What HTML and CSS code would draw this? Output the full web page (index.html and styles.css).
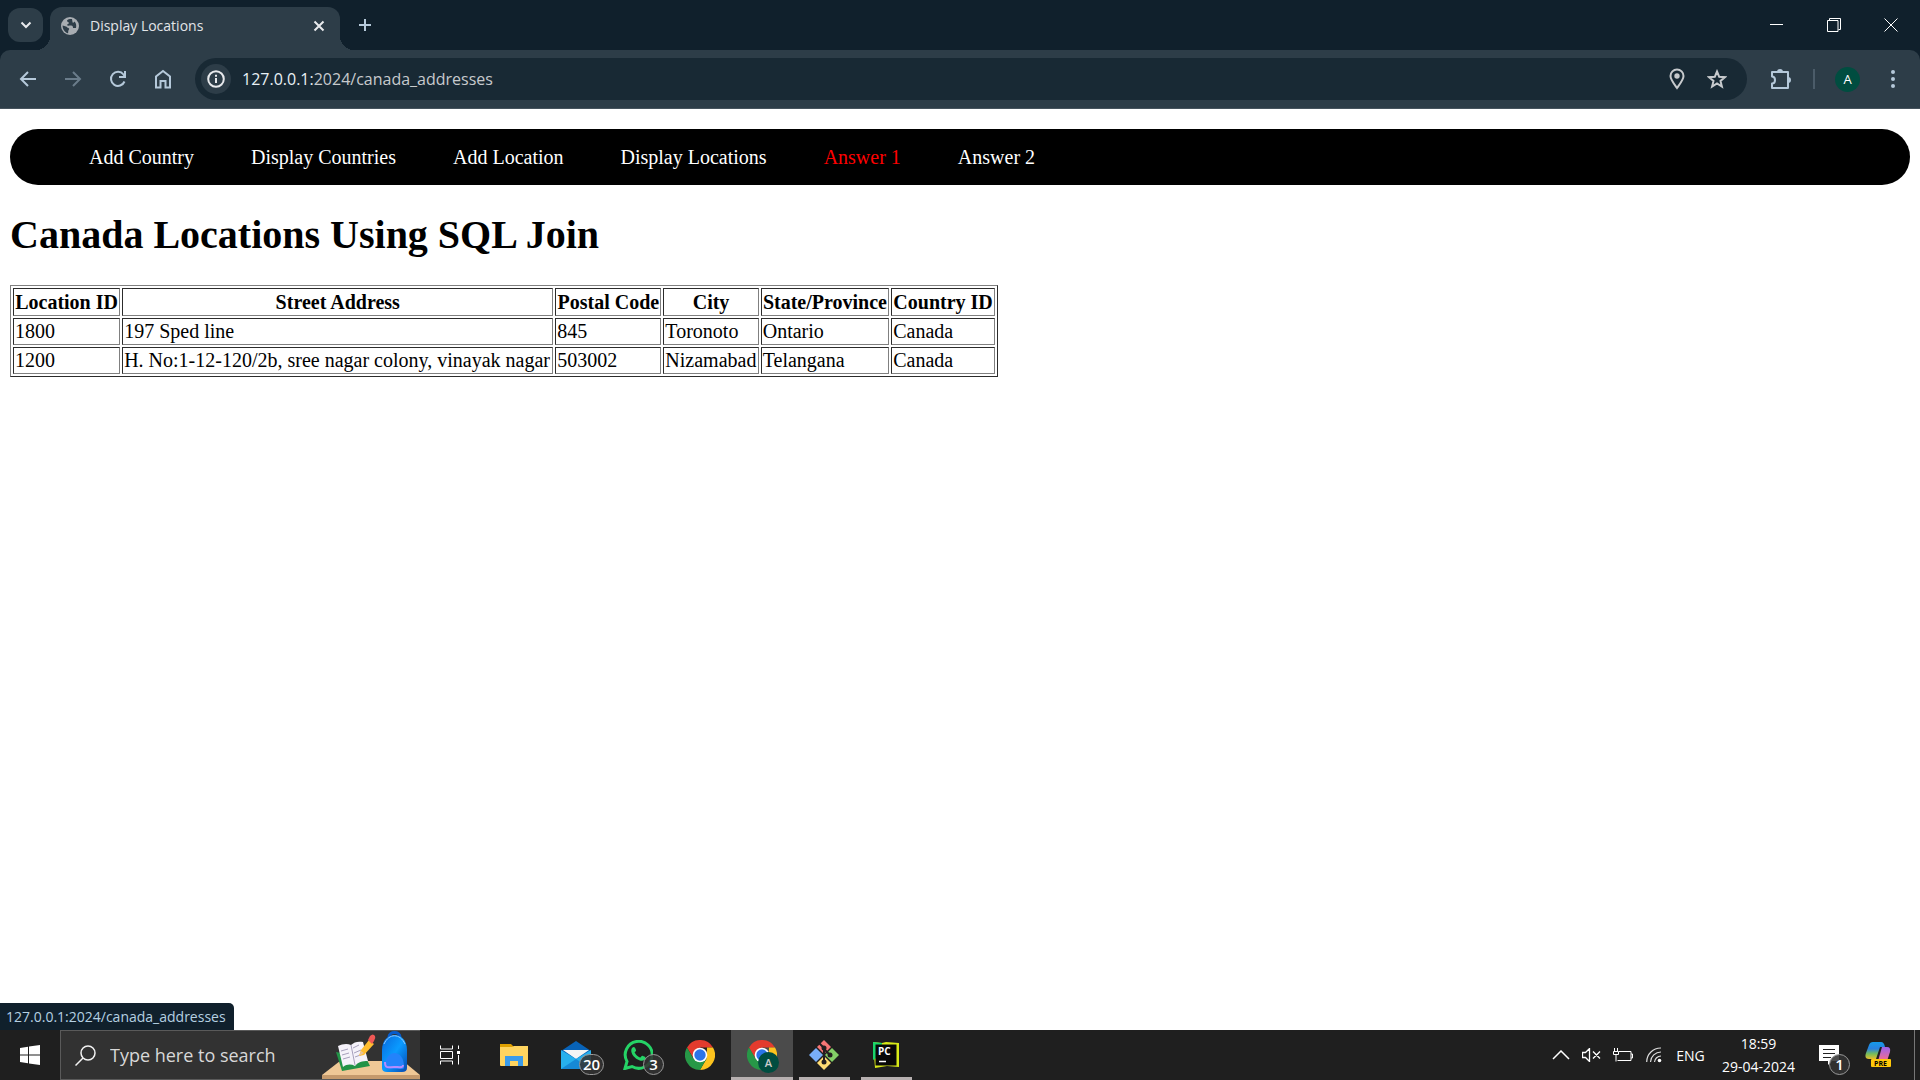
FILE: index.html
```html
<!DOCTYPE html>
<html lang="en">
<head>
<meta charset="utf-8">
<title>Display Locations</title>
<link rel="stylesheet" href="styles.css">
</head>
<body>
<header class="browser">
  <div class="tabstrip">
    <button class="tab-search" aria-label="Search tabs"><svg width="12" height="8" viewBox="0 0 12 8"><path d="M1.5 1.5 6 6l4.500-4.500" class="line"/></svg></button>
    <div class="tab">
      <svg width="18" height="18" viewBox="0 0 18 18"><circle cx="9" cy="9" r="9" fill="#a8adb2"/><path d="M9 2c-2 0-3 1-3 2s2 1 2 2-2 1-2 2 2 .5 4 .5 2 1.500 2 2.500h3c.7-3 0-5-1.500-6.500-1 1.500-2 1.500-2 .5S11 3 11 2zM1.600 8.500l3.400 1c1 .3 1 1.500 2.500 1.500.8.500 1 1 .2 2s-.2 2-.7 3.300C4 15.500 1.500 12.500 1.600 8.500z" fill="#2d3d48"/></svg>
      <span class="tab-title">Display Locations</span>
      <button class="icon-button close" aria-label="Close tab"><svg width="12" height="12" viewBox="0 0 12 12"><path d="M1.500 1.500l9 9m0-9-9 9" class="line"/></svg></button>
    </div>
    <button class="icon-button new-tab" aria-label="New tab"><svg width="14" height="14" viewBox="0 0 14 14"><path d="M7 1v12M1 7h12" class="line tint"/></svg></button>
    <div class="window-controls">
      <button class="icon-button" aria-label="Minimize"><svg width="14" height="14" viewBox="0 0 14 14"><path d="M0 6.500h13" stroke="#fff"/></svg></button>
      <button class="icon-button" aria-label="Restore"><svg width="14" height="14" viewBox="0 0 14 14"><path d="M.5 2.500h10.500v11H.5zM2.500 2.500v-2h11v11h-2" fill="none" stroke="#fff"/></svg></button>
      <button class="icon-button" aria-label="Close"><svg width="14" height="14" viewBox="0 0 14 14"><path d="M.5.500l13 13m0-13-13 13" stroke="#fff"/></svg></button>
    </div>
  </div>
  <div class="toolbar">
    <button class="icon-button" aria-label="Back"><svg width="18" height="18" viewBox="0 0 18 18"><path d="M17 9H2.500M9 2 2 9l7 7" class="line tint"/></svg></button>
    <button class="icon-button dim" aria-label="Forward"><svg width="18" height="18" viewBox="0 0 18 18"><path d="M1 9h14.500M9 2l7 7-7 7" class="line tint"/></svg></button>
    <button class="icon-button" aria-label="Reload"><svg width="18" height="18" viewBox="0 0 18 18"><path d="M15.500 11.500A7 7 0 1 1 14.500 4.500L15.800 6M16 1v6h-6" class="line tint"/></svg></button>
    <button class="icon-button" aria-label="Home"><svg width="18" height="20" viewBox="0 0 18 20"><path d="M2 18.500V7.500L9 2l7 5.500v11h-4.500v-6.500h-5v6.500z" class="line tint"/></svg></button>
    <div class="omnibox">
      <button class="site-info" aria-label="Site information"><svg width="18" height="18" viewBox="0 0 18 18"><circle cx="9" cy="9" r="7.800" class="line"/><path d="M9 8v5M9 4.700v2" class="line"/></svg></button>
      <div class="url"><span class="host">127.0.0.1:</span>2024/canada_addresses</div>
      <button class="icon-button" aria-label="Location"><svg width="16" height="22" viewBox="0 0 16 22"><path d="M8 20C4 14.500 1.500 11.500 1.500 8a6.500 6.500 0 0 1 13 0c0 3.500-2.500 6.500-6.500 12z" class="line gray"/><circle cx="8" cy="8" r="2.700" fill="#c7cacd"/></svg></button>
      <button class="icon-button" aria-label="Bookmark"><svg width="20" height="20" viewBox="0 0 20 20"><path d="M10 2.500l2.200 5.300 5.700.4-4.400 3.700 1.400 5.600-4.900-3-4.900 3 1.400-5.600-4.400-3.700 5.700-.4z" class="line gray"/></svg></button>
    </div>
    <button class="icon-button" aria-label="Extensions"><svg width="22" height="22" viewBox="0 0 22 22"><path d="M2 4h16v16H2v-4.500c4 0 4-7 0-7z" class="line tint" stroke-linejoin="round"/><path d="M7 4a3 3 0 0 1 6 0zM18 9a3 3 0 0 1 0 6z" fill="#b5c9da"/></svg></button>
    <span class="divider"></span>
    <button class="icon-button" aria-label="Profile"><span class="avatar">A</span></button>
    <button class="icon-button" aria-label="Menu"><svg width="6" height="20" viewBox="0 0 6 20"><path d="M3 3v.01M3 10v.01M3 17v.01" stroke="#b5c9da" stroke-width="4" stroke-linecap="round"/></svg></button>
  </div>
</header>

<main class="page">
  <nav class="menu">
    <a href="#">Add Country</a>
    <a href="#">Display Countries</a>
    <a href="#">Add Location</a>
    <a href="#">Display Locations</a>
    <a href="#" class="current">Answer 1</a>
    <a href="#">Answer 2</a>
  </nav>
  <h1>Canada Locations Using SQL Join</h1>
  <table class="locations">
    <thead><tr><th>Location ID</th><th>Street Address</th><th>Postal Code</th><th>City</th><th>State/Province</th><th>Country ID</th></tr></thead>
    <tbody>
      <tr><td>1800</td><td>197 Sped line</td><td>845</td><td>Toronoto</td><td>Ontario</td><td>Canada</td></tr>
      <tr><td>1200</td><td>H. No:1-12-120/2b, sree nagar colony, vinayak nagar</td><td>503002</td><td>Nizamabad</td><td>Telangana</td><td>Canada</td></tr>
    </tbody>
  </table>
  <div class="status">127.0.0.1:2024/canada_addresses</div>
</main>

<footer class="taskbar">
  <button class="start" aria-label="Start"><svg width="20" height="20" viewBox="0 0 20 20"><path d="M0 3l8-1.200V9.500H0zM9 1.600 20 0v9.500H9zM0 10.500h8v7.800L0 17zM9 10.500h11V20L9 18.400z" fill="#fff"/></svg></button>
  <div class="search">
    <svg width="21" height="21" viewBox="0 0 21 21"><circle cx="13" cy="8" r="7" fill="none" stroke="#f2f2f2" stroke-width="1.500"/><path d="M8 13 .5 20.500" stroke="#f2f2f2" stroke-width="1.500"/></svg>
    <input type="text" aria-label="Search" placeholder="Type here to search">
    <svg width="98" height="48" viewBox="0 0 98 48">
      <defs><linearGradient id="bag" x2="1" y2="1"><stop stop-color="#0867dc"/><stop offset=".5" stop-color="#0a9bff"/><stop offset="1" stop-color="#0648b0"/></linearGradient></defs>
      <path d="M18 30h63l17 14H0z" fill="#efc896"/><path d="M0 44h98v4H0z" fill="#c59a6c"/>
      <path d="M14 21l6 19 28-5-4-8z" fill="#229347"/><path d="M16 15l5 21c4-3 8-3 12-1 3-4 7-5 13-5l-5-19c-5-1-9 0-12 3-4-2-9-1-13 1z" fill="#f5f2fa"/>
      <path d="M29 14l4 20M19 20l7-2m-6 6 7-2m-6 6 7-2m3-9 6-3m-5 8 7-3m-6 7 8-3" stroke="#a7a0bc" fill="none"/>
      <path d="M37 25l2-6 8-10 5 4-10 11z" fill="#ffbd30"/><path d="M46 9l2-4q3-3 5 0 1 2-1 5l-2 3z" fill="#ef5855"/><path d="M37 25l2-5 3 2z" fill="#e9c39a"/>
      <path d="M67 6c0-6 11-6 11 0" fill="none" stroke="#075bcb" stroke-width="3"/><path d="M60 19c0-20 25-20 25 0v18q0 4-5 4H65q-5 0-5-4z" fill="url(#bag)"/><path d="M62 13c5-11 16-11 21 0" stroke="#8ecbff" fill="none"/><path d="M63 37c-1-20 20-20 19 0q0 1-3 1H66q-3 0-3-1z" fill="#2383fb"/><path d="M63 31c0 7 3 5 9 5s9 1 9-2" stroke="#b58cff" stroke-width="2" fill="none"/>
    </svg>
  </div>
  <button class="task-view" aria-label="Task view"><svg width="20" height="20" viewBox="0 0 20 20"><path d="M.5.500V4h12V.500M.5 19.500V16h12v3.500M.5 6.500h12v7H.5zM18.500.500V4M18.500 10v9.500" fill="none" stroke="#fff"/><path d="M17 6h3v3h-3z" fill="#fff"/></svg></button>
  <button class="app" aria-label="File Explorer"><svg width="28" height="24" viewBox="0 0 28 24"><path d="M0 1h11l3 3H0z" fill="#dfa000"/><path d="M0 4h12l2-1h14v19q0 1-1 1H1q-1 0-1-1z" fill="#ffd45f"/><path d="M5 23V13h18v10h-5v-5h-8v5z" fill="#3b9be9"/></svg></button>
  <button class="app" aria-label="Mail"><svg width="30" height="28" viewBox="0 0 30 28"><path d="M0 10 15 0l15 10-15 10z" fill="#0863b8"/><path d="M2 9h26L15 18z" fill="#f5f5f5"/><path d="M0 9l15 9 15-9v19H0z" fill="#27b0ed"/><path d="M0 28l15-10 15 10z" fill="#1689d6"/></svg><span class="badge wide">20</span></button>
  <button class="app" aria-label="WhatsApp"><svg width="30" height="30" viewBox="0 0 30 30"><path d="M2 28.500l2-7A13.500 13.500 0 1 1 9 26.500z" fill="none" stroke="#25d366" stroke-width="3"/><path d="M9 8c2-2 3-1 4 2 .5 1.500-2 2-1 3 1 2 3 4 5 4.500 1 .2 1.500-2 2.500-1.700 3 1.200 3.500 1.500 3 3C19 25 5 15 9 8z" fill="#25d366"/></svg><span class="badge">3</span></button>
  <button class="app" aria-label="Chrome"><svg width="30" height="30" viewBox="0 0 30 30"><path d="M2 7.500a15 15 0 0 1 26 0H15l-6.500 11z" fill="#e33b2e"/><path d="M28 7.500A15 15 0 0 1 15 30l6.500-11.300L22 7.500z" fill="#fcc31e"/><path d="M2 7.500A15 15 0 0 0 15 30l6.500-11.300H8.500z" fill="#279847"/><circle cx="15" cy="15" r="7.300" fill="#fff"/><circle cx="15" cy="15" r="5.700" fill="#2b74e8"/></svg></button>
  <button class="app active" aria-label="Chrome, profile A"><svg width="30" height="30" viewBox="0 0 30 30"><path d="M2 7.500a15 15 0 0 1 26 0H15l-6.500 11z" fill="#e33b2e"/><path d="M28 7.500A15 15 0 0 1 15 30l6.500-11.300L22 7.500z" fill="#fcc31e"/><path d="M2 7.500A15 15 0 0 0 15 30l6.500-11.300H8.500z" fill="#279847"/><circle cx="15" cy="15" r="7.300" fill="#fff"/><circle cx="15" cy="15" r="5.700" fill="#2b74e8"/></svg><span class="badge profile">A</span></button>
  <button class="app running" aria-label="Git"><svg width="30" height="30" viewBox="0 0 30 30"><path d="M15 0l7 7-7 7-7-7z" fill="#f87676"/><path d="M23 8l7 7-7 7-7-7z" fill="#83cf67"/><path d="M7 8l7 7-7 7-7-7z" fill="#79aef8"/><path d="M15 16l7 7-7 7-7-7z" fill="#ffdc74"/><path d="M10 3l5 5v14M15 9l6 6" fill="none" stroke="#231f20" stroke-width="2"/><circle cx="15" cy="8" r="2.500" fill="#231f20"/><circle cx="15" cy="22" r="2.500" fill="#231f20"/><circle cx="21" cy="15" r="2.500" fill="#231f20"/></svg></button>
  <button class="app running" aria-label="PyCharm"><svg width="26" height="26" viewBox="0 0 26 26"><path d="M0 0l9 1 4-1 13 1v24l-12-1-12 2z" fill="#d9ea18"/><path d="M0 0l9 1-1 12-8 5z" fill="#19d56c"/><path d="M2.500 2.500h21v21h-21z" fill="#080808"/><text x="5" y="13" class="logo-text" fill="#fff">PC</text><path d="M6 19.500h7" stroke="#fff" stroke-width="1.500"/></svg></button>
  <div class="tray">
    <button class="tray-icon" aria-label="Hidden icons"><svg width="18" height="10" viewBox="0 0 18 10"><path d="M1 9l8-8 8 8" fill="none" stroke="#fff" stroke-width="1.500"/></svg></button>
    <button class="tray-icon" aria-label="Muted"><svg width="19" height="14" viewBox="0 0 19 14"><path d="M.5 4.500h3l4-4v13l-4-4h-3zM11 3.500l7 7m0-7-7 7" fill="none" stroke="#fff" stroke-width="1.300"/></svg></button>
    <button class="tray-icon" aria-label="Battery"><svg width="20" height="14" viewBox="0 0 20 14"><path d="M6 3.500h12v9H4.500M18 6h1.500v4H18M1.500 0v3M4.500 0v3M.5 3.500h5v3h-5zM3 6.500v7" fill="none" stroke="#fff"/></svg></button>
    <button class="tray-icon" aria-label="Wi-Fi"><svg width="16" height="16" viewBox="0 0 16 16"><path d="M.7 15A14 14 0 0 1 15 1M4.500 15A10.500 10.500 0 0 1 15 5M8.500 15A6.500 6.500 0 0 1 15 9" fill="none" stroke="#ddd" stroke-width="1.200"/><circle cx="13.500" cy="13.500" r="1.800" fill="#fff"/></svg></button>
    <button class="language">ENG</button>
    <button class="clock"><span>18:59</span><span>29-04-2024</span></button>
    <button class="notices" aria-label="Notifications"><svg width="20" height="20" viewBox="0 0 20 20"><path d="M0 0h20v16h-7l-4 4v-4H0z" fill="#fff"/><path d="M4 4.500h12M4 8.500h12M4 12.500h8" stroke="#222"/></svg><span class="badge">1</span></button>
    <button class="copilot" aria-label="Copilot"><svg width="26" height="26" viewBox="0 0 26 26"><defs><linearGradient id="c1" x2="0" y2="1"><stop stop-color="#149bea"/><stop offset=".4" stop-color="#2a81df"/><stop offset=".7" stop-color="#76bd59"/><stop offset="1" stop-color="#e7bd2b"/></linearGradient><linearGradient id="c2" x2="0" y2="1"><stop stop-color="#9b62ef"/><stop offset="1" stop-color="#f86d87"/></linearGradient></defs><path d="M8 0h8q3 0 4 5h-5L11 17H4Q-1 17 1 11L4 3Q5 0 8 0z" fill="url(#c1)"/><path d="M17 5h5q4 0 3 5l-3 9h-9z" fill="url(#c2)"/><rect x="6" y="17" width="20" height="8" rx="1" fill="#ffc80a"/><text x="9" y="24" class="pre-text">PRE</text></svg></button>
    <span class="peek"></span>
  </div>
</footer>
</body>
</html>
```

FILE: styles.css
```css
* { box-sizing: border-box; }
body { margin: 0; min-height: 100vh; display: flex; flex-direction: column; background: #fff; font-family: "Open Sans", "Noto Sans", sans-serif; }
button { border: 0; padding: 0; margin: 0; background: none; color: inherit; font: inherit; display: flex; align-items: center; justify-content: center; flex-shrink: 0; }
svg { display: block; flex-shrink: 0; }
.line { fill: none; stroke: #e8eaed; stroke-width: 2; }
.line.tint { stroke: #b5c9da; }
.line.gray { stroke: #c7cacd; }

.browser { background: #10202c; }
.tabstrip { display: flex; height: 50px; padding: 7px 1px 0 8px; }
.tab-search { width: 35px; height: 34px; margin: 1px 7px 0 0; border-radius: 12px; background: #2d3d48; }
.tab { position: relative; display: flex; align-items: center; gap: 11px; width: 290px; height: 43px; padding: 0 9px 6px 11px; border-radius: 12px 12px 0 0; background: #2d3d48; }
.tab::before, .tab::after { content: ""; position: absolute; bottom: 0; width: 14px; height: 14px; }
.tab::before { right: 100%; background: radial-gradient(circle at 0 0, transparent 14px, #2d3d48 14px); }
.tab::after { left: 100%; background: radial-gradient(circle at 100% 0, transparent 14px, #2d3d48 14px); }
.tab-title { flex: 1; font-size: 14px; line-height: 20px; color: #e2e5e8; }
.close { width: 24px; height: 24px; }
.new-tab { width: 34px; height: 34px; margin: 1px 0 0 8px; }
.window-controls { display: flex; margin-left: auto; height: 36px; }
.window-controls .icon-button { width: 57px; }
.toolbar { display: flex; align-items: center; height: 59px; padding: 0 5px; background: #2d3d48; border-radius: 10px 10px 0 0; border-bottom: 1px solid #46535d; }
.toolbar .icon-button { width: 45px; height: 42px; }
.dim { opacity: .45; }
.omnibox { flex: 1; display: flex; align-items: center; height: 42px; margin: 0 11px 0 10px; padding: 0 10px 0 6px; border-radius: 21px; background: #182934; }
.omnibox .icon-button { width: 40px; }
.site-info { width: 30px; height: 30px; border-radius: 50%; background: #2d3d48; }
.url { flex: 1; margin-left: 11px; font-size: 16px; line-height: 24px; color: #c7cacd; }
.host { color: #e8f0f5; }
.divider { width: 2px; height: 20px; margin: 0 10px; background: #4b5c69; }
.avatar { width: 25px; height: 25px; border-radius: 50%; background: #004d40; color: #fff; font-size: 13px; line-height: 25px; }

.page { position: relative; flex: 1; padding: 20px 10px; font-family: "Liberation Serif", "Times New Roman", serif; font-size: 20px; color: #000; }
.menu { display: flex; align-items: center; gap: 57px; height: 56px; padding: 0 79px; border-radius: 28px; background: #000; }
.menu a { color: #fff; text-decoration: none; }
.menu .current { color: #f00; }
h1 { margin: 27px 0; font-size: 40px; line-height: 46px; }
.locations { width: 988px; border: 1px outset #808080; border-spacing: 2px; }
.locations th, .locations td { padding: 1px; border: 1px inset #808080; line-height: 24px; }
.locations td { line-height: 23px; }
.status { position: absolute; left: 0; bottom: 0; height: 27px; padding: 0 8px 0 6px; border-radius: 0 5px 0 0; background: #10202c; color: #b5d0e2; font-family: "Open Sans", sans-serif; font-size: 14px; line-height: 27px; }

.taskbar { display: flex; height: 50px; background: #1f1f1f; color: #fff; }
.start { width: 60px; }
.search { display: flex; align-items: center; width: 360px; padding-left: 14px; border: 1px solid #5a5a5a; border-right-width: 0; background: #323232; }
.search input { flex: 1; min-width: 0; padding: 0; margin-left: 14px; border: 0; outline: 0; background: none; font: inherit; font-size: 18px; }
.search input::placeholder { color: #d8d8d8; opacity: 1; }
.task-view { width: 60px; margin-right: 3px; }
.app { position: relative; width: 62px; }
.active { background: linear-gradient(#b7b0b0, #b7b0b0) bottom / 100% 3px no-repeat #4b4b4b; }
.running { background: linear-gradient(#b7b0b0, #b7b0b0) bottom / 51px 3px no-repeat; }
.badge { position: absolute; left: 36px; top: 24px; width: 21px; height: 21px; border: 1px solid #999; border-radius: 11px; background: #333d; font-size: 15px; font-weight: 600; line-height: 19px; }
.wide { left: 34px; width: 25px; }
.profile { left: 27px; top: 22px; border: 0; background: #004d40; font-size: 11px; line-height: 21px; color: #ccc; }
.logo-text { font: bold 10px "Open Sans", sans-serif; }
.pre-text { font: bold 7px "Open Sans", sans-serif; }
.tray { display: flex; margin-left: auto; }
.tray-icon { width: 31px; }
.language { width: 43px; font-size: 14px; }
.clock { flex-direction: column; width: 93px; font-size: 14px; line-height: 23px; }
.notices { position: relative; width: 48px; }
.notices .badge { left: 24px; }
.copilot { width: 50px; }
.peek { width: 6px; margin-left: 11px; border-left: 1px solid #777; }
```
